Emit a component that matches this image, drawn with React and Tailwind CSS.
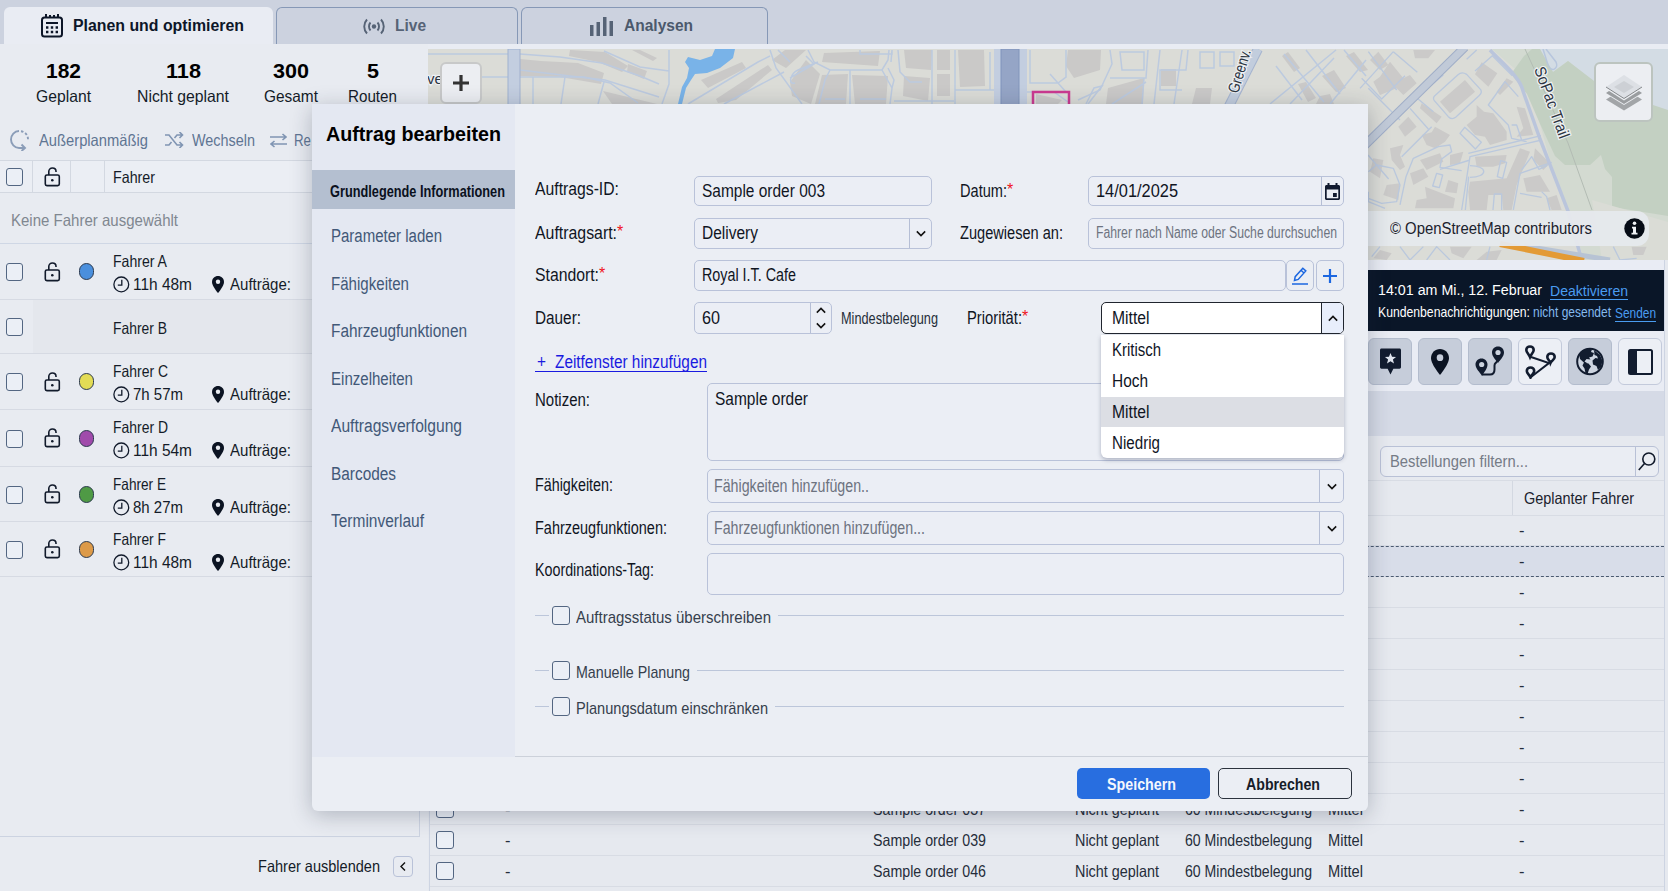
import { useLayoutEffect, useRef, useState } from "react";

// Texte ajusté à une largeur fixe (police étroite)
const Fit = ({ w, className = "", children }) => {
    const ref = useRef(null);

    useLayoutEffect(() => {
        const el = ref.current;
        el.style.transform = "none";
        const natural = el.getBoundingClientRect().width;
        if (natural > 0) el.style.transform = `scaleX(${w / natural})`;
    }, [w, children]);

    return (
        <span className={`block shrink-0 whitespace-nowrap ${className}`} style={{ width: w }}>
            <span ref={ref} className="inline-block origin-left">{children}</span>
        </span>
    );
};

const drivers = [
    { name: "Fahrer A", w: 54, time: "11h 48m", tw: 59, color: "#4a8fdd", h: 56 },
    { name: "Fahrer B", w: 54, h: 54 },
    { name: "Fahrer C", w: 55, time: "7h 57m", tw: 50, color: "#e3dc55", h: 56 },
    { name: "Fahrer D", w: 55, time: "11h 54m", tw: 59, color: "#a04bab", h: 57 },
    { name: "Fahrer E", w: 53, time: "8h 27m", tw: 50, color: "#4f9a45", h: 55 },
    { name: "Fahrer F", w: 53, time: "11h 48m", tw: 59, color: "#dd9a48", h: 55 },
];

const stats = [
    { value: "182", vw: 35, label: "Geplant", lw: 55, box: "w-[110px] ml-[8px]" },
    { value: "118", vw: 35, label: "Nicht geplant", lw: 92, box: "w-[130px]" },
    { value: "300", vw: 36, label: "Gesamt", lw: 54, box: "w-[85px]" },
    { value: "5", vw: 12, label: "Routen", lw: 49, box: "w-[79px]" },
];

const navItems = [
    ["Parameter laden", 111],
    ["Fähigkeiten", 78],
    ["Fahrzeugfunktionen", 136],
    ["Einzelheiten", 82],
    ["Auftragsverfolgung", 131],
    ["Barcodes", 65],
    ["Terminverlauf", 93],
];

// Seules les dernières commandes dépassent sous la fenêtre
const orders = ["", "", "", "", "", "", "", "", "", "037", "039", "046"];

const priorities = [
    ["Kritisch", 49],
    ["Hoch", 36],
    ["Mittel", 37.5],
    ["Niedrig", 48],
];

/* ---------- Icônes ---------- */

const Lock = () => (
    <svg width="17" height="20" viewBox="0 0 17 20" fill="none" stroke="#111a2b" strokeWidth="1.6">
        <rect x="1.3" y="8" width="14" height="10.6" rx="1.6" />
        <path d="M4.8 8V4.6C4.8 2.4 6.4 1 8.4 1s3.6 1.4 3.6 3.3V5" />
        <circle cx="8.3" cy="13.2" r="1.3" fill="#111a2b" stroke="none" />
    </svg>
);

const Clock = () => (
    <svg width="17" height="17" viewBox="0 0 17 17" fill="none" stroke="#111a2b" strokeWidth="1.3">
        <circle cx="8.3" cy="8.4" r="7.4" />
        <path d="M8.8 3.8v5.4H4.8" />
    </svg>
);

const Pin = ({ className = "w-3 h-4", hole = "#e8ebf1" }) => (
    <svg className={className} viewBox="0 0 12 17" preserveAspectRatio="none">
        <path d="M6 0C2.7 0 0 2.6 0 5.9 0 10 6 17 6 17s6-7 6-11.1C12 2.6 9.3 0 6 0z" fill="#0b1322" />
        <circle cx="6" cy="5.7" r="2.2" fill={hole} />
    </svg>
);

const Chevron = ({ d = "M1 1.5l5 5 5-5", className = "w-3 h-2" }) => (
    <svg className={className} viewBox="0 0 12 8" fill="none" stroke="#111" strokeWidth="1.9">
        <path d={d} />
    </svg>
);

const CheckBox = ({ className = "" }) => (
    <span className={`block w-[17px] h-[18px] shrink-0 rounded-[3px] border-[1.5px] border-[#536682] bg-[#ebeff6] ${className}`}></span>
);

/* ---------- Carte ---------- */

const stripBuildings = [
    "520,59 541,61 560,62 578,63 604,73 601,84 560,77 520,76",
    "570,50 605,52 628,66 622,72 598,62 569,56",
    "628,64 647,71 644,79 627,72",
    "632,50 640,50 657,58 653,61",
    "603,91 657,104 612,104",
    "701,80 742,62 746,68 708,88",
    "716,99 768,65 772,70 736,100 718,103",
    "772,60 785,50 806,50 786,68",
    "790,82 806,60 820,74 811,104 792,96",
    "824,53 880,51 878,66 822,62",
    "822,75 848,74 846,104 815,104",
    "852,75 888,76 886,104 855,104",
    "904,50 932,50 931,70 906,68",
    "904,76 930,78 928,101 903,96",
    "937,50 950,50 950,70 937,70",
    "937,74 950,74 950,96 937,96",
    "958,50 984,50 985,86 960,87",
    "1068,50 1101,50 1100,70 1074,78 1066,66",
    "1036,94 1062,100 1058,104 1036,104",
    "1108,88 1144,78 1143,104 1106,104",
    "1161,69 1176,69 1176,86 1161,86",
    "1196,88 1212,88 1210,104 1192,104",
    "1288,52 1300,68 1294,72 1282,56",
    "1322,76 1334,70 1346,88 1336,92",
    "1298,84 1306,82 1316,98 1308,102",
    "1346,56 1354,52 1368,70 1360,72",
    "1320,96 1330,94 1334,104 1316,104",
];

// Quartier à l'est, unités locales (1/3 px)
const eastBuildings = [
    "60,95 90,50 130,100 150,90 170,115 130,150 110,130 60,150 40,110",
    "30,45 55,20 85,60 60,75",
    "160,15 225,15 205,40 165,40",
    "365,52 412,85 385,125 345,88",
    "315,105 345,140 270,205 240,170",
    "440,100 460,110 420,150 410,140",
    "185,175 245,215 230,235 180,190",
    "145,215 170,245 135,275 115,245",
    "185,270 215,262 225,245 270,270 255,290 225,310 200,300",
    "350,180 372,200 400,205 440,260 440,285 390,300 375,275 345,270 320,240 350,215",
    "470,185 495,190 520,270 470,275 490,250",
    "90,310 130,300 120,330 135,365 120,375 95,345",
    "40,340 70,345 60,400 30,380",
    "80,420 120,415 115,465 70,450",
    "270,330 310,320 300,355 270,360",
    "180,345 240,325 250,350 200,375",
    "150,385 190,370 205,395 160,420",
    "195,425 285,460 280,490 165,490 170,465 200,460",
    "265,405 295,415 290,445 255,440",
    "345,335 440,330 435,355 400,365 350,365",
    "330,410 440,400 480,310 510,320 470,420 455,495 430,495 425,450 385,450 380,495 330,495 325,440",
    "490,400 540,390 570,440 500,440",
    "560,460 590,450 605,495 575,495",
    "525,310 570,355 550,375 520,345",
    "270,605 335,605 310,640 275,625",
    "350,645 380,620 425,615 410,645",
    "40,640 60,615 95,625 80,645",
    "815,605 860,605 850,630 820,630",
];

const eastStreets = [
    "M320 88l42 46c5 8 0 14-5 18l-70 65c-8 6-16 4-22-2l-42-48c-5-6-2-12 3-16l68-62c8-7 18-6 26-1z",
    "M545 285L330 335 305 495M543 272L325 325M316 495l10-100M330 345l-90 28",
    "M500 290l-45-10-10-40-60-60 50-70 40 45M455 240l15 0 15 45",
    "M25 380l25-20 50 10 20 50-10 50-45 5-40-15M25 440v30l50 20",
    "M120 480l18-85 22-55 75-35 35-5 5 20-30 22-5 25 65 10",
    "M300 265l14-18 50 45-18 20zM230 385l-12 38 20 5 10-38z",
    "M330 362c55 0 55 35 0 35M440 352l-12 48-16-5 10-48z",
    "M425 495v-48h-22l-4 48M575 352l-95 33-20 110",
    "M485 375l30-40 22 38 25-12M545 440l15 15 10 40M480 445l65 12",
    "M25 130l95 95M0 130L100 20M100 20l72 62M150 190l55 62M24 330l62 72M125 335l90-90",
    "M25 20l85 115M5 100l60 62 70-70M350 15l-30 28M345 78l52-46 60 60M160 150l60 50M250 90l-30 25",
    "M60 605l-25 30M120 605l30 40 40-40M200 645l30-40 40 40M380 645l10-40M760 605l20 40 50-5",
];

const streets = [
    "M428 54h80M428 77h80M472 104V77M520 54l40 3 42 6 38 13 19 8M520 77h64l26 6 28 20",
    "M604 51l36 16 29 4M669 50v34l-7 20M533 77v27M565 77l-4 27M604 82l-6 22M520 70l50 6 35 4 54 17",
    "M688 104l70-42 12-6M724 104l60-32M770 50l6 18 26 36M778 50l12 12M790 78l24-14-8-8M795 83c-8 2-4-10 3-13l20-8",
    "M808 50l6 12 16 8h52l6-10 1-10M830 70l-5 10-6 24M850 70v34M882 70l10 18 2-8-6-12M860 50v4h32v-4M892 50l-1 12M892 88l-2 16",
    "M898 50l2 22 10 10h12M932 50v54M955 50v54M955 90h40v14M990 52v38M894 101h60M845 99h-20M860 99h26",
    "M1030 50v33h28l8-6V50M1026 92h28l14 10M1086 104l8-16 8-2-14 18M1050 74l16 18",
    "M1110 50l2 14-12 26-22 10M1110 78h36l2-28M1112 104l34-22M1144 78l-2 26M1120 52h24v18h-22z",
    "M1160 50l-6 54M1182 50l-8 54M1188 50l-2 20h-26v20h22M1200 52h14v16h-14zM1220 52h14v14h-14z",
    "M1270 104l66-54M1290 104l44-46M1284 54l40 48M1306 50l34 44M1276 66l26 34M1330 104l36-44M1344 50l22 26",
];

const MapView = () => (
    <svg className="block w-[1240px] h-[211px]" viewBox="428 49 1240 211">
        <rect x="428" y="49" width="1240" height="211" fill="#dbdcd7" />
        {/* espaces verts et eau */}
        <path d="M1492 49L1522 75 1536 110 1550 160 1570 214 1584 260H1668V49z" fill="#d3dad1" />
        <path d="M1533 49H1668V112L1596 84 1568 61 1553 72z" fill="#d3dce4" />
        <path d="M1524 56l8-7h8l13 23 15-11 30 23 40 16 30 10v106l-56-9v-30l-7-8-4-14-11 10h-25l-10-9-14-30-14-32-16-20z" fill="#c3d0c2" />
        <path d="M1592 200l76 22v38h-66z" fill="#dadcd6" />
        <path d="M715 49h20l-2 9-13 10-13 5-12 1-4 6-5 8-4 16h-4l4-17 5-9 2-10-4-6 3-5 12 3 12-4z" fill="#79b3e8" />
        {/* bâtiments et rues */}
        {stripBuildings.map((points) => (
            <polygon key={points} points={points} fill="#cac9c8" />
        ))}
        {streets.map((d) => (
            <path key={d} d={d} fill="none" stroke="#bccadf" strokeWidth="1.5" />
        ))}
        <g transform="translate(1360 45) scale(0.3333)">
            {eastBuildings.map((points) => (
                <polygon key={points} points={points} fill="#cbcac9" />
            ))}
            {eastStreets.map((d) => (
                <path key={d} d={d} fill="none" stroke="#bac8dd" strokeWidth="4" strokeLinejoin="round" />
            ))}
        </g>
        <rect x="508" y="49" width="12" height="60" fill="#c3cee0" stroke="#a0b1cf" />
        <rect x="994" y="49" width="33" height="60" fill="#c3cee0" />
        <rect x="1001" y="49" width="18" height="60" fill="#95a5c6" stroke="#8094bb" />
        <path d="M1258 49L1228 108" stroke="#a5b4cf" strokeWidth="10" />
        <path d="M1258 49L1228 108" stroke="#c2cddd" strokeWidth="8" />
        <path d="M1465 47L1360 150" stroke="#a0aec8" strokeWidth="9" />
        <path d="M1465 47L1360 150" stroke="#c1cad8" strokeWidth="7" />
        <path d="M1490 50c13 14 30 27 33 41l17 48 28 72 14 50" fill="none" stroke="#bac5dc" strokeWidth="3.5" />
        <path d="M1525 49l43 94 24 67" fill="none" stroke="#b3bcb4" />
        <path d="M1543 49l5 16c3 8 11 4 8-3l-10-13" fill="none" stroke="#b7c6dd" strokeWidth="1.5" />
        <path d="M1524 246l86 14" stroke="#b7c3d4" strokeWidth="5" />
        <path d="M1500 244l84 17" stroke="#e39a35" strokeWidth="6" />
        <rect x="1033" y="92" width="36" height="36" fill="none" stroke="#cb3a90" strokeWidth="2.5" />
        <g fontFamily="Liberation Sans, sans-serif" fill="#2c3542" stroke="#eef0f3" strokeWidth="2.5" paintOrder="stroke">
            <text x="427" y="84" fontSize="15">ve</text>
            <text fontSize="16" textLength="45" lengthAdjust="spacingAndGlyphs" transform="translate(1238 94) rotate(-73)">Greenv.</text>
            <text fontSize="16" textLength="75" lengthAdjust="spacingAndGlyphs" transform="translate(1534 69) rotate(70)">SoPac Trail</text>
        </g>
    </svg>
);

/* ---------- Onglets ---------- */

const Tabs = () => (
    <header className="flex h-[44px] w-full shrink-0 items-end bg-[#ccd2df] pl-1 text-base font-bold">
        <button className="flex h-[37px] w-[269px] items-center rounded-t-md bg-[#e9ecf3] pl-[37px] text-[#0d1628]">
            <svg width="22" height="24" viewBox="0 0 22 24" fill="none" stroke="#0d1628" strokeWidth="2">
                <rect x="1" y="3.5" width="20" height="19" rx="2.5" />
                <path d="M5 0v4M9 1v3M13 1v3M17 0v4M5 9h12" />
                <path d="M5 13.5h2.4M9.8 13.5h2.4M14.6 13.5h2.4M5 18h2.4M9.8 18h2.4M14.6 18h2.4" strokeWidth="2.4" />
            </svg>
            <Fit w={171} className="ml-[10px]">Planen und optimieren</Fit>
        </button>
        <button className="ml-[3px] flex h-[37px] w-[242px] items-center rounded-t-md border border-b-0 border-[#8698b6] pl-[86px] text-[#566376]">
            <svg width="22" height="17" viewBox="0 0 22 17" fill="none" stroke="#566376" strokeWidth="1.9">
                <circle cx="11" cy="8.5" r="2.2" fill="#566376" stroke="none" />
                <path d="M7.5 4.5c-2 2.2-2 5.8 0 8M14.5 4.5c2 2.2 2 5.8 0 8M4 1.5c-3.7 4-3.7 10 0 14M18 1.5c3.7 4 3.7 10 0 14" />
            </svg>
            <Fit w={31} className="ml-[10px]">Live</Fit>
        </button>
        <button className="ml-[3px] flex h-[37px] w-[247px] items-center rounded-t-md border border-b-0 border-[#8698b6] pl-[68px] text-[#4b596c]">
            <svg width="23" height="19" viewBox="0 0 23 19" fill="#566376">
                <path d="M0 8h3.5v11H0zM6.5 5H10v14H6.5zM13 0h3.5v19H13zM19.5 4H23v15h-3.5z" />
            </svg>
            <Fit w={69} className="ml-[11px]">Analysen</Fit>
        </button>
    </header>
);

/* ---------- Panneau des chauffeurs ---------- */

const DriverPanel = () => (
    <aside className="flex w-[428px] shrink-0 flex-col bg-[#e8ebf1] text-[16.5px] text-[#141b28]">
        <div className="flex pt-[14px]">
            {stats.map((s) => (
                <div key={s.label} className={`flex flex-col items-center ${s.box}`}>
                    <Fit w={s.vw} className="h-[26px] text-[21px] leading-[26px] font-bold text-black">{s.value}</Fit>
                    <Fit w={s.lw} className="h-[25px] leading-[25px]">{s.label}</Fit>
                </div>
            ))}
        </div>

        <div className="flex h-[51px] items-center pt-[11px] pl-[10px] text-[#5f7593]">
            <svg width="19" height="21" viewBox="0 0 19 21" fill="none" stroke="#8b9db8" strokeWidth="1.9">
                <path d="M9 1C4.5 1 1 5 1 9.5S4.5 18 9 18h5M11.5 14.5L15 18l-3.5 3" />
                <path d="M11 1.3a8 8 0 0 1 7 8" strokeDasharray="2.5 2" />
            </svg>
            <Fit w={109} className="ml-[10px]">Außerplanmäßig</Fit>
            <svg className="ml-[17px]" width="19" height="16" viewBox="0 0 19 16" fill="none" stroke="#8095b3" strokeWidth="1.6">
                <path d="M0 3h4l8 10h5M0 13h4l2.5-3M9.5 6L12 3h5M14.5 0l3 3-3 3M14.5 10l3 3-3 3" />
            </svg>
            <Fit w={63} className="ml-[8px]">Wechseln</Fit>
            <svg className="ml-[15px]" width="17" height="15" viewBox="0 0 17 15" fill="none" stroke="#8095b3" strokeWidth="1.6">
                <path d="M0 4h16M12.5 1L16 4l-3.5 3M17 11H1M4.5 8L1 11l3.5 3" />
            </svg>
            <Fit w={17} className="ml-[7px]">Re</Fit>
        </div>

        <div className="mr-[8px] flex h-[677px] flex-col border-r border-b border-[#ccd3e1]">
            <div className="flex h-[33px] shrink-0 items-stretch border-y border-[#d3d8e1] bg-[#ebeef4]">
                <div className="flex w-[33px] items-center border-r border-[#d3d8e1] pl-[6px]"><CheckBox /></div>
                <div className="flex w-[38px] items-center border-r border-[#d3d8e1] pl-[11px]"><Lock /></div>
                <div className="w-[34px] border-r border-[#d3d8e1]"></div>
                <div className="flex items-center pt-[2px] pl-[8px]"><Fit w={42}>Fahrer</Fit></div>
            </div>
            <div className="flex h-[51px] shrink-0 items-center border-b border-[#cfd7e5] pt-[4px] pl-[11px] text-[#808790]">
                <Fit w={167}>Keine Fahrer ausgewählt</Fit>
            </div>
            {drivers.map((d) => (
                <div key={d.name} className="flex shrink-0 border-b border-[#d6dae3]" style={{ height: d.h }}>
                    <div className="flex w-[33px] items-center pt-[1px] pl-[6px]"><CheckBox /></div>
                    {d.time ? (
                        <>
                            <div className="flex w-[38px] items-center pl-[11px]"><Lock /></div>
                            <div className="flex w-[42px] items-center pl-[8px]">
                                <span className="block h-[17px] w-[15px] rounded-full border border-[#2c3a4f]" style={{ backgroundColor: d.color }}></span>
                            </div>
                            <div className="pt-[6px]">
                                <Fit w={d.w} className="h-[22px] leading-[22px]">{d.name}</Fit>
                                <div className="flex h-[25px] items-center">
                                    <div className="flex w-[99px] items-center gap-[3px]">
                                        <Clock />
                                        <Fit w={d.tw}>{d.time}</Fit>
                                    </div>
                                    <Pin className="mr-[6px] h-[17px] w-[12px]" />
                                    <Fit w={61}>Aufträge:</Fit>
                                </div>
                            </div>
                        </>
                    ) : (
                        <div className="flex flex-1 items-center bg-[#e4e7ed] pt-[3px] pl-[80px]">
                            <Fit w={d.w}>{d.name}</Fit>
                        </div>
                    )}
                </div>
            ))}
        </div>

        <div className="flex flex-1 items-center justify-end pt-[5px] pr-[15px]">
            <Fit w={122} className="mr-[13px]">Fahrer ausblenden</Fit>
            <button className="flex h-[21px] w-[20px] items-center justify-center rounded-[4px] border border-[#b9c2d8]">
                <svg width="6" height="9" viewBox="0 0 6 9" fill="none" stroke="#111" strokeWidth="1.4"><path d="M5 .5l-4 4 4 4" /></svg>
            </button>
        </div>
    </aside>
);

/* ---------- Barre d'outils à droite ---------- */

const toolIcons = [
    {
        key: "star",
        active: true,
        icon: (
            <svg width="21" height="27" viewBox="0 0 22 27">
                <path d="M1.5 0h19c.8 0 1.5.7 1.5 1.5v18c0 .8-.7 1.5-1.5 1.5H14l-3 6-3-6H1.5C.7 21 0 20.3 0 19.5v-18C0 .7.7 0 1.5 0z" fill="#121c2f" />
                <path d="M11 4.5l1.6 4 4.2.2-3.3 2.7 1.2 4.1L11 13.2l-3.7 2.3 1.2-4.1-3.3-2.7 4.2-.2z" fill="#dfe4ee" />
            </svg>
        ),
    },
    { key: "pin", active: true, icon: <Pin className="h-[26px] w-[18px]" hole="#c4cbd9" /> },
    {
        key: "route",
        active: true,
        icon: (
            <svg width="30" height="31" viewBox="0 0 30 31">
                <path d="M7 28.5h8c3 0 4.5-2 4.5-5v-4c0-3 2-2 3-5" fill="none" stroke="#121c2f" strokeWidth="2" />
                <path d="M6.5 12.5C3 12.5.5 15.2.5 18.6c0 4 4.5 8 6.5 11.4 2-3.4 5.5-7.4 5.5-11.4 0-3.4-2.5-6.1-6-6.1zM23 .5c-3.5 0-6 2.6-6 6C17 10.5 21 14 23 17c2-3 6-6.5 6-10.5 0-3.4-2.5-6-6-6z" fill="#121c2f" />
                <circle cx="6.7" cy="18.5" r="2.6" fill="#ccd3df" />
                <circle cx="23" cy="6.5" r="2.6" fill="#ccd3df" />
            </svg>
        ),
    },
    {
        key: "stops",
        active: false,
        icon: (
            <svg width="31" height="34" viewBox="0 0 31 34" fill="none" stroke="#121c2f" strokeWidth="2">
                <path d="M6 12l18 6L6 32" />
                <path d="M5 1.5C2.8 1.5 1.3 3.1 1.3 5c0 2.5 2.5 4 3.7 7 1.2-3 3.7-4.5 3.7-7C8.7 3.1 7.2 1.5 5 1.5zM26 8.500c-2.2 0-3.7 1.6-3.7 3.5 0 2.5 2.5 3.5 3.2 6 1.2-2.5 4.2-3.5 4.2-6 0-1.900-1.5-3.5-3.7-3.5zM5.500 22.500c-2.2 0-3.7 1.6-3.7 3.5 0 2.5 2.5 3.5 3.7 6.5 1.2-3 3.7-4 3.7-6.500 0-1.900-1.5-3.5-3.7-3.5z" fill="#eceff5" strokeWidth="2.6" />
            </svg>
        ),
    },
    {
        key: "globe",
        active: true,
        icon: (
            <svg width="28" height="29" viewBox="0 0 28 29">
                <circle cx="14" cy="14.5" r="12.8" fill="#cdd4e0" stroke="#121c2f" strokeWidth="2" />
                <path d="M3 7C5 3.5 9 1.5 13 1.5l3 1-1 2.5 3 1-1.5 3.5-3.5 1 1.5 2-4-.5-2 2.5 2.5 1.5-1.5 1L4 12zM8 15.5l4.5 1 2.5 3-2 3-1.5 4.5-2-1-1-4.5-2-3zM18 3l6 5 2.5 6-1.5 6-3 3-1.5-4-3.5-1.5-.5-4 3-2.5 2.5.5-1-2.5-2.5-1z" fill="#121c2f" />
            </svg>
        ),
    },
    {
        key: "panel",
        active: false,
        icon: (
            <svg width="25" height="26" viewBox="0 0 25 26">
                <rect x="1" y="1" width="23" height="24" rx="1.5" fill="#eceff5" stroke="#121c2f" strokeWidth="2" />
                <rect x="1" y="1" width="8" height="24" fill="#121c2f" />
            </svg>
        ),
    },
];

const Workspace = () => (
    <main className="flex w-[1240px] shrink-0 flex-col bg-[#e6e9ef]">
        <div className="relative h-[216px] shrink-0 bg-[#e9ecf3] pt-[5px]">
            <MapView />
            <button className="absolute top-[18px] left-[12px] flex h-[42px] w-[42px] items-center justify-center rounded-md border-2 border-[#c8c9c9] bg-[#eceef2]">
                <svg width="16" height="16" viewBox="0 0 16 16" stroke="#333" strokeWidth="3.2"><path d="M8 0v16M0 8h16" /></svg>
            </button>
            <button className="absolute top-[18px] right-[15px] flex h-[60px] w-[59px] items-center justify-center rounded-md border-2 border-[#bcc4bf] bg-[#eceef2]">
                <svg width="38" height="37" viewBox="0 0 38 37">
                    <path d="M19 14L37 25.5 19 36.5 1 25.5z" fill="#a2a5a8" />
                    <path d="M19 9L37 20 19 31 1 20z" fill="#eceef2" />
                    <path d="M19 7L37 19 19 30 1 19z" fill="#9a9da0" />
                    <path d="M19 2L37 15 19 26.5 1 15z" fill="#eceef2" />
                    <path d="M19 1L37 13 19 24.5 1 13z" fill="#dde0e5" />
                    <path d="M1 13l18 11.5L37 13" fill="none" stroke="#85888b" />
                    <path d="M19 7l10 6-10 6-10-6z" fill="#cdd0d5" />
                </svg>
            </button>
            <div className="absolute top-[167px] right-[19px] flex h-[35px] w-[281px] items-center rounded-r-xl bg-[#e6e9ed]/95 pl-[22px] text-base text-[#1b222d]">
                <Fit w={202}>© OpenStreetMap contributors</Fit>
                <svg className="ml-[32px]" width="21" height="21" viewBox="0 0 21 21">
                    <circle cx="10.5" cy="10.5" r="10.2" fill="#060c16" />
                    <circle cx="10.5" cy="5.3" r="1.8" fill="#eef1f5" />
                    <path d="M8 8.800h4v6h1.500v1.700H7.500v-1.700H9v-4.300H8z" fill="#eef1f5" />
                </svg>
            </div>
        </div>

        <div className="mr-[3px] ml-[1px] flex flex-1 flex-col border-x border-[#cdd4e2]">
            <div className="flex h-[131px] shrink-0 flex-col items-end bg-[#e9ecf4] pt-[10px]">
                <div className="flex h-[61px] w-[296px] shrink-0 flex-col bg-[#0a1628] pt-[9px] pl-[10px] text-white">
                    <div className="flex h-[22px] items-center text-[15.5px]">
                        <Fit w={164}>14:01 am Mi., 12. Februar</Fit>
                        <a className="ml-[8px] h-[20px] border-b border-[#4a9cf0] leading-[22px] text-[#4a9cf0]"><Fit w={78}>Deaktivieren</Fit></a>
                    </div>
                    <div className="flex h-[23px] items-center text-[15px]">
                        <Fit w={152}>Kundenbenachrichtigungen:</Fit>
                        <Fit w={78} className="ml-[3px] text-[#84b9ee]">nicht gesendet</Fit>
                        <a className="ml-[4px] h-[19px] border-b border-[#4a9cf0] leading-[20px] text-[#4a9cf0]"><Fit w={41}>Senden</Fit></a>
                    </div>
                </div>
                <div className="mt-[7px] flex w-[296px] gap-[6px]">
                    {toolIcons.map((t) => (
                        <button key={t.key} className={`flex h-[47px] w-[44px] shrink-0 items-center justify-center rounded-md border ${t.active ? "border-[#b3bccd] bg-[#c6cdda]" : "border-[#c3cadb] bg-[#eceff5]"}`}>
                            {t.icon}
                        </button>
                    ))}
                </div>
            </div>
            <div className="h-[45px] shrink-0 bg-[#d5dae6]"></div>
            <div className="flex h-[45px] shrink-0 items-center justify-end border-b border-[#d8dce4] pt-[8px] pr-[5px]">
                <div className="mb-[1px] flex h-[31px] w-[279px] items-center rounded-md border border-[#b9c1d6] bg-[#eaedf3] pl-[9px] text-[17px] text-[#757b86]">
                    <Fit w={138}>Bestellungen filtern...</Fit>
                    <span className="ml-auto flex h-full w-[23px] items-center justify-center border-l border-[#b9c1d6]">
                        <svg width="18" height="19" viewBox="0 0 18 19" fill="none" stroke="#111a2b" strokeWidth="1.6"><circle cx="10.8" cy="7" r="6" /><path d="M6.5 11.5L.8 18" /></svg>
                    </span>
                </div>
            </div>
            <div className="flex h-[35px] shrink-0 items-center justify-end border-b border-[#d8dce4] text-[16.5px] text-[#1b222d]">
                <div className="flex h-full w-[152px] items-center border-l border-[#d3d8e1] pt-[1px] pl-[11px]">
                    <Fit w={110}>Geplanter Fahrer</Fit>
                </div>
            </div>
            {orders.map((id, i) => (
                <div
                    key={i}
                    className={`grid shrink-0 grid-cols-[69px_368px_202px_110px_143px_191px_1fr] items-center pl-[6px] text-[16.5px] text-[#252d3a] ${i === 0 ? "h-[30px]" : "h-[31px]"} ${i === 1 ? "border-y border-dashed border-[#4b5a70] bg-[#d8dde9]" : "border-b border-[#d8dce4]"}`}
                >
                    {id ? (
                        <>
                            <CheckBox className="w-[18px]" />
                            <span>-</span>
                            <Fit w={113}>{`Sample order ${id}`}</Fit>
                            <Fit w={84}>Nicht geplant</Fit>
                            <Fit w={127}>60 Mindestbelegung</Fit>
                            <Fit w={35}>Mittel</Fit>
                        </>
                    ) : null}
                    <span className="col-start-7">-</span>
                </div>
            ))}
        </div>
    </main>
);

/* ---------- Fenêtre d'édition ---------- */

const Label = ({ w, required, className = "", children }) => (
    <div className={`flex shrink-0 text-[17.5px] text-[#10151f] ${className}`}>
        <Fit w={w}>{children}</Fit>
        {required && <span className="text-[16px] text-[#f0121c]">*</span>}
    </div>
);

const ArrowCell = ({ className = "w-[22px]", children }) => (
    <span className={`ml-auto flex h-full shrink-0 flex-col items-center justify-center border-l border-[#b5bed5] ${className}`}>{children}</span>
);

const field = "flex shrink-0 items-center rounded-[5px] border-[1.5px] border-[#b9c2d9] bg-[#ebeef5] pl-[7px] text-[17.5px] text-[#10151f]";

const OptionLine = ({ w, className = "", children }) => (
    <div className={`flex h-[20px] items-center text-[17px] text-[#363f4d] ${className}`}>
        <span className="mr-[3px] h-px w-[14px] bg-[#bcc6da]"></span>
        <CheckBox className="h-[19px] w-[18px]" />
        <Fit w={w} className="mt-[5px] ml-[6px]">{children}</Fit>
        <span className="ml-[7px] h-px flex-1 bg-[#bcc6da]"></span>
    </div>
);

const OrderDialog = () => {
    const [priority, setPriority] = useState("Mittel");

    return (
        <div className="absolute top-[104px] left-[312px] flex h-[707px] w-[1056px] flex-col rounded-b-md bg-[#ebeef4] shadow-[0_4px_22px_rgba(30,40,60,0.28)]">
            <div className="flex h-[653px] shrink-0">
                <nav className="w-[203px] shrink-0 bg-[#e4e8f2]">
                    <h2 className="pt-[18px] pl-[14px] text-[20px] leading-[24px] font-bold text-black">
                        <Fit w={175}>Auftrag bearbeiten</Fit>
                    </h2>
                    <div className="mt-[24px] flex h-[39px] items-center bg-[#b4bfd0] pt-[4px] pl-[18px] text-[17px] font-bold text-[#0b111d]">
                        <Fit w={175}>Grundlegende Informationen</Fit>
                    </div>
                    <div className="pt-[4px] text-[18px] text-[#425878]">
                        {navItems.map(([label, w]) => (
                            <div key={label} className="flex h-[47.5px] items-center pl-[19px]"><Fit w={w}>{label}</Fit></div>
                        ))}
                    </div>
                </nav>

                <div className="flex flex-1 flex-col border-b border-[#ccd1da] pt-[72px] pr-[24px] pl-[20px]">
                    <div className="flex h-[30px] items-center">
                        <Label w={84} className="mb-[4px] w-[159px]">Auftrags-ID:</Label>
                        <div className={`${field} h-[30px] w-[238px]`}><Fit w={123}>Sample order 003</Fit></div>
                        <Label w={47} required className="ml-[28px] w-[128px]">Datum:</Label>
                        <div className={`${field} h-[30px] w-[256px]`}>
                            <Fit w={82}>14/01/2025</Fit>
                            <ArrowCell>
                                <svg width="15" height="17" viewBox="0 0 15 17">
                                    <path d="M2.5 0h2v2h6V0h2v2h1c.8 0 1.5.7 1.5 1.5v12c0 .8-.7 1.5-1.5 1.5h-12C.7 17 0 16.3 0 15.5v-12C0 2.7.7 2 1.5 2h1z" fill="#111a2f" />
                                    <path d="M1.7 6.5h11.6v8.8H1.7z" fill="#ebeef5" />
                                    <path d="M8 10h3.8v4H8z" fill="#111a2f" />
                                </svg>
                            </ArrowCell>
                        </div>
                    </div>

                    <div className="mt-[11px] flex h-[32px] items-center">
                        <Label w={82} required className="w-[159px]">Auftragsart:</Label>
                        <div className={`${field} h-[31px] w-[238px]`}>
                            <Fit w={56}>Delivery</Fit>
                            <ArrowCell><Chevron className="h-[7px] w-[10px]" /></ArrowCell>
                        </div>
                        <Label w={103} className="ml-[28px] w-[128px]">Zugewiesen an:</Label>
                        <div className={`${field} h-[31px] w-[256px] !text-base !text-[#6d7380]`}>
                            <Fit w={241}>Fahrer nach Name oder Suche durchsuchen</Fit>
                        </div>
                    </div>

                    <div className="mt-[11px] flex h-[31px] items-center">
                        <Label w={64} required className="w-[159px]">Standort:</Label>
                        <div className={`${field} h-[31px] w-[592px]`}><Fit w={94}>Royal I.T. Cafe</Fit></div>
                        <button className="flex h-[31px] w-[28px] items-center justify-center rounded-[5px] border-[1.5px] border-[#b9c2d9]">
                            <svg width="16" height="18" viewBox="0 0 16 18" fill="none" stroke="#1c67e0" strokeWidth="1.5">
                                <path d="M2.5 13.5l.7-3.8L10.800 1.2l3 2.7-7.6 8.5zM9 3.3l3 2.7M0 17h16" />
                            </svg>
                        </button>
                        <button className="ml-[2px] flex h-[31px] w-[28px] items-center justify-center rounded-[5px] border-[1.5px] border-[#b9c2d9]">
                            <svg width="14" height="14" viewBox="0 0 14 14" stroke="#1c67e0" strokeWidth="2.2"><path d="M7 0v14M0 7h14" /></svg>
                        </button>
                    </div>

                    <div className="mt-[11px] flex h-[32px] items-center">
                        <Label w={46} className="w-[159px]">Dauer:</Label>
                        <div className={`${field} h-[32px] w-[138px]`}>
                            <Fit w={18}>60</Fit>
                            <ArrowCell className="w-[21px] gap-[8px]">
                                <Chevron d="M1 6.5l5-5 5 5" className="h-[7px] w-[10px]" />
                                <Chevron className="h-[7px] w-[10px]" />
                            </ArrowCell>
                        </div>
                        <Fit w={97} className="ml-[9px] text-[16.5px] text-[#262e3a]">Mindestbelegung</Fit>
                        <Label w={55} required className="ml-[29px] w-[134px]">Priorität:</Label>
                        <div className="relative flex h-[32px] w-[243px] shrink-0 items-center rounded-[5px] border-[1.5px] border-[#20252e] bg-white pl-[10px] text-[17.5px] text-[#10151f]">
                            <Fit w={37.5}>{priority}</Fit>
                            <span className="ml-auto flex h-full w-[22px] items-center justify-center rounded-r-[4px] border-l border-[#20252e] bg-[#e8eefb]">
                                <Chevron d="M1 6.5l5-5 5 5" className="h-[7px] w-[10px]" />
                            </span>
                            <ul className="absolute top-[32px] -left-px z-10 w-[243px] overflow-hidden rounded-b-md bg-white shadow-[0_2px_4px_rgba(60,70,100,0.35)]">
                                {priorities.map(([name, w]) => (
                                    <li key={name} onClick={() => setPriority(name)} className={`flex h-[30.8px] items-center pl-[11px] ${name === priority ? "bg-[#dcdee4]" : ""}`}>
                                        <Fit w={w}>{name}</Fit>
                                    </li>
                                ))}
                            </ul>
                        </div>
                    </div>

                    <a className="mt-[15px] flex h-[23px] w-[172px] items-center border-b-[1.5px] border-[#1a1ae0] pt-[5px] text-[17.5px] text-[#1a1ae0]">
                        <Fit w={9} className="ml-[2px]">+</Fit>
                        <Fit w={152} className="ml-[9px]">Zeitfenster hinzufügen</Fit>
                    </a>

                    <div className="mt-[11px] flex h-[78px]">
                        <Label w={55} className="mt-[4px] w-[172px]">Notizen:</Label>
                        <div className={`${field} h-[78px] w-[637px] !items-start pt-[2px]`}><Fit w={93}>Sample order</Fit></div>
                    </div>

                    <div className="mt-[8px] flex h-[34px] items-center">
                        <Label w={78} className="mb-[2px] w-[172px]">Fähigkeiten:</Label>
                        <div className={`${field} h-[34px] w-[637px] !pl-[6px] !text-[#6d7380]`}>
                            <Fit w={155}>Fähigkeiten hinzufügen..</Fit>
                            <ArrowCell className="w-[24px]"><Chevron className="h-[7px] w-[10px]" /></ArrowCell>
                        </div>
                    </div>

                    <div className="mt-[8px] flex h-[34px] items-center">
                        <Label w={132} className="w-[172px]">Fahrzeugfunktionen:</Label>
                        <div className={`${field} h-[34px] w-[637px] !pl-[6px] !text-[#6d7380]`}>
                            <Fit w={211}>Fahrzeugfunktionen hinzufügen...</Fit>
                            <ArrowCell className="w-[24px]"><Chevron className="h-[7px] w-[10px]" /></ArrowCell>
                        </div>
                    </div>

                    <div className="mt-[8px] flex h-[42px] items-center">
                        <Label w={119} className="mb-[8px] w-[172px]">Koordinations-Tag:</Label>
                        <div className={`${field} h-[42px] w-[637px]`}></div>
                    </div>

                    <OptionLine w={195} className="mt-[10px]">Auftragsstatus überschreiben</OptionLine>
                    <OptionLine w={114} className="mt-[35px]">Manuelle Planung</OptionLine>
                    <OptionLine w={192} className="mt-[16px]">Planungsdatum einschränken</OptionLine>
                </div>
            </div>

            <div className="flex flex-1 items-start justify-end gap-[8px] pt-[11px] pr-[16px] text-base font-bold">
                <button className="flex h-[31px] w-[133px] items-center justify-center rounded-[5px] bg-[#286ee0] pt-[2px] pr-[4px] text-[#f4f7fd]">
                    <Fit w={69}>Speichern</Fit>
                </button>
                <button className="flex h-[31px] w-[134px] items-center justify-center rounded-[5px] border-[1.5px] border-[#2b323d] pt-[2px] pr-[4px] text-[#161c28]">
                    <Fit w={74}>Abbrechen</Fit>
                </button>
            </div>
        </div>
    );
};

const App = () => (
    <div className="relative flex h-[891px] w-[1668px] flex-col overflow-hidden bg-[#e8ebf1] font-['Liberation_Sans',Arial,sans-serif]">
        <Tabs />
        <div className="flex flex-1">
            <DriverPanel />
            <Workspace />
        </div>
        <OrderDialog />
    </div>
);

export default App;
